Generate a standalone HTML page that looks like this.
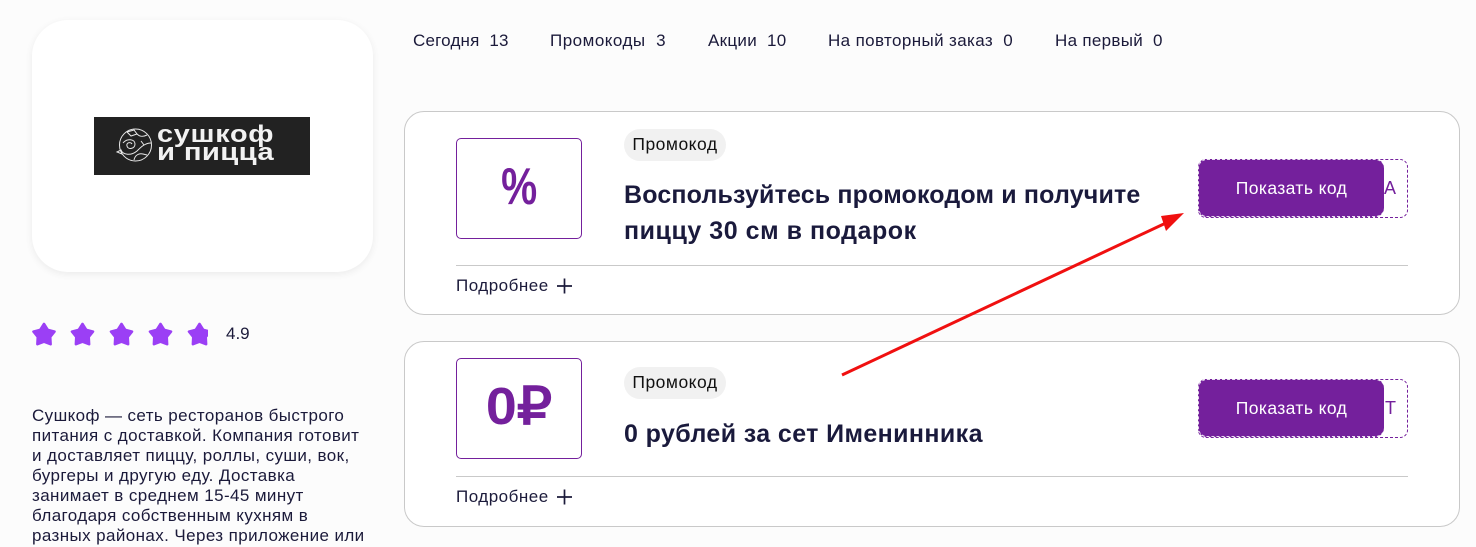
<!DOCTYPE html>
<html lang="ru">
<head>
<meta charset="utf-8">
<title>Сушкоф</title>
<style>
html,body{margin:0;padding:0}
body{width:1476px;height:547px;overflow:hidden;background:#fcfcfc;position:relative;font-family:"Liberation Sans",sans-serif;color:#1b1a3a}
.a{position:absolute;white-space:nowrap}
.card{position:absolute;left:404px;width:1054px;background:#fff;border:1px solid #c9c9c9;border-radius:20px}
.box{position:absolute;left:456px;width:124px;height:99px;border:1px solid #74209c;border-radius:5px;background:#fff;color:#74209c;font-weight:700;text-align:center;font-size:52px;line-height:97px}
.box span{display:inline-block}
.tag{position:absolute;left:624px;width:102px;height:32px;background:#f1f1f1;border-radius:16px;color:#111;font-size:17.5px;line-height:31px;text-align:center;letter-spacing:.5px}
.title{position:absolute;left:624px;font-size:25px;font-weight:700;line-height:36px;color:#1a1a3c;white-space:nowrap;letter-spacing:.16px}
.line{position:absolute;left:456px;width:952px;height:1px;background:#c9c9c9}
.more{position:absolute;left:456px;font-size:17px;line-height:20px;color:#1b1a3a;white-space:nowrap;letter-spacing:.5px}
.code{position:absolute;left:1198px;width:208px;height:57px;border:1px dashed #74209c;border-radius:8px;background:#fff;color:#74209c;font-size:18px;line-height:57px;text-align:right}
.code span{position:absolute;right:11px;top:0}
.btn{position:absolute;left:1198px;width:186px;height:58px;background:#74209c;border-radius:9px;color:#fff;font-size:17.5px;line-height:57px;text-align:center;letter-spacing:.4px;border:1px dashed #e8dcef;border-right:0;box-sizing:border-box}
.nav{position:absolute;top:31px;font-size:17px;line-height:20px;color:#1b1a3a;white-space:nowrap;letter-spacing:.38px}
.desc{position:absolute;left:32px;top:406px;width:340px;font-size:17px;line-height:20px;color:#1b1a3a;letter-spacing:.4px;white-space:nowrap}
</style>
</head>
<body>
<div class="a" style="left:32px;top:20px;width:341px;height:252px;background:#fff;border-radius:36px;box-shadow:0 2px 8px rgba(0,0,0,.07)"></div>
<div class="a" style="left:94px;top:117px;width:216px;height:58px;background:#222"></div>
<svg class="a" style="left:115px;top:127px" width="40" height="36" viewBox="0 0 40 36" fill="none" stroke="#e8e8e8" stroke-width="1">
<circle cx="20.500" cy="18" r="16"/>
<path d="M2 25l4-2 1 4-5-2zM12 5l7-2 3 4-6 2-4-4M22 7c3 3 6 3 10 1M8 16c4-5 12-4 12 1s-7 6-8 2 4-4 5-2M6 23c2 5 10 6 16 1 4-4 8-8 14-8M19 33c1-5 5-7 9-6l4 1M26 14l3 4"/>
</svg>
<div class="a" style="left:157px;top:123px;font-size:24px;font-weight:700;line-height:24px;color:#f2f2f2;letter-spacing:.6px;transform:scaleX(1.2);transform-origin:0 0">сушкоф</div>
<div class="a" style="left:157px;top:141px;font-size:24px;font-weight:700;line-height:24px;color:#f2f2f2;letter-spacing:.3px;transform:scaleX(1.22);transform-origin:0 0">и пицца</div>

<svg class="a" style="left:31px;top:321px" width="177" height="28" viewBox="0 0 177 28" fill="#9b3ff5" stroke="#9b3ff5" stroke-width="2.600" stroke-linejoin="round">
<path d="M13 3L16.800 8.900 23.500 10.600 19.200 16 19.600 23.200 13 20.700 6.400 23.200 6.800 16 2.500 10.600 9.200 8.900z"/>
<path transform="translate(38.500 0)" d="M13 3L16.800 8.900 23.500 10.600 19.200 16 19.600 23.200 13 20.700 6.400 23.200 6.800 16 2.500 10.600 9.200 8.900z"/>
<path transform="translate(77.500 0)" d="M13 3L16.800 8.900 23.500 10.600 19.200 16 19.600 23.200 13 20.700 6.400 23.200 6.800 16 2.500 10.600 9.200 8.900z"/>
<path transform="translate(116.500 0)" d="M13 3L16.800 8.900 23.500 10.600 19.200 16 19.600 23.200 13 20.700 6.400 23.200 6.800 16 2.500 10.600 9.200 8.900z"/>
<path transform="translate(155.500 0)" d="M13 3L16.800 8.900 23.500 10.600 19.200 16 19.600 23.200 13 20.700 6.400 23.200 6.800 16 2.500 10.600 9.200 8.900z"/>
</svg>
<div class="a" style="left:226px;top:324px;font-size:17px;line-height:20px;color:#1b1a3a">4.9</div>

<div class="desc">Сушкоф — сеть ресторанов быстрого<br>питания с доставкой. Компания готовит<br>и доставляет пиццу, роллы, суши, вок,<br>бургеры и другую еду. Доставка<br>занимает в среднем 15-45 минут<br>благодаря собственным кухням в<br>разных районах. Через приложение или</div>

<div class="nav" style="left:413px;letter-spacing:.2px">Сегодня&nbsp; 13</div>
<div class="nav" style="left:550px;letter-spacing:.5px">Промокоды&nbsp; 3</div>
<div class="nav" style="left:708px;letter-spacing:.3px">Акции&nbsp; 10</div>
<div class="nav" style="left:828px">На повторный заказ&nbsp; 0</div>
<div class="nav" style="left:1055px;letter-spacing:.3px">На первый&nbsp; 0</div>

<div class="card" style="top:111px;height:202px"></div>
<div class="box" style="top:138px"><span style="transform:scaleX(.78)">%</span></div>
<div class="tag" style="top:129px">Промокод</div>
<div class="title" style="top:177px">Воспользуйтесь промокодом и получите<br><span style="letter-spacing:.54px">пиццу 30 см в подарок</span></div>
<div class="code" style="top:159px"><span>А</span></div>
<div class="btn" style="top:159px">Показать код</div>
<div class="line" style="top:265px"></div>
<div class="more" style="top:276px">Подробнее</div>
<svg class="a" style="left:556px;top:278px" width="17" height="16" fill="none" stroke="#1b1a3a" stroke-width="1.700"><path d="M1 8h15M8.500 .500v15"/></svg>

<div class="card" style="top:341px;height:184px"></div>
<div class="box" style="top:358px"><span style="transform:scaleX(1.07)">0₽</span></div>
<div class="tag" style="top:367px">Промокод</div>
<div class="title" style="top:416px;letter-spacing:.39px">0 рублей за сет Именинника</div>
<div class="code" style="top:379px"><span>Т</span></div>
<div class="btn" style="top:379px">Показать код</div>
<div class="line" style="top:476px"></div>
<div class="more" style="top:487px">Подробнее</div>
<svg class="a" style="left:556px;top:489px" width="17" height="16" fill="none" stroke="#1b1a3a" stroke-width="1.700"><path d="M1 8h15M8.500 .500v15"/></svg>

<svg class="a" style="left:0;top:0;pointer-events:none" width="1476" height="547" fill="none">
<path d="M842 375L1168 222" stroke="#f01010" stroke-width="3"/>
<path d="M1184 213L1161 216L1166 231z" fill="#f01010"/>
</svg>
</body>
</html>
